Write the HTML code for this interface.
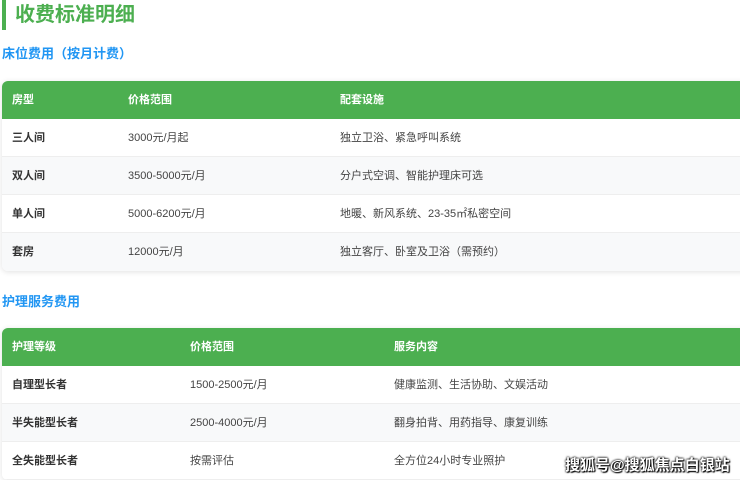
<!DOCTYPE html>
<html><head><meta charset="utf-8"><style>
body{margin:0;width:740px;height:480px;overflow:hidden;background:#fff;font-family:"Liberation Sans","Noto Sans CJK SC",sans-serif;position:relative}
.bar{position:absolute;left:2px;top:0;width:4px;height:30px;background:#4caf50}
h1{position:absolute;left:15px;top:2px;margin:0;font-size:20px;color:#4caf50;font-weight:bold;line-height:26px}
h2{position:absolute;left:2px;margin:0;font-size:13px;color:#2196f3;font-weight:bold;line-height:16px}
.t{position:absolute;left:2px;width:750px;border-radius:6px;overflow:hidden;box-shadow:0 1px 6px rgba(0,0,0,.12)}
.r{height:38px;position:relative;font-size:11px;color:#444;border-bottom:1px solid #eee;box-sizing:border-box}
.r:nth-child(odd){background:#f8f9fa}
.r.h{background:#4caf50;color:#fff;font-weight:bold;border:0}
.r span{position:absolute;top:0;line-height:38px}
.r span:first-child{font-weight:bold;color:#333}
.r.h span{color:#fff}
.wm{position:absolute;left:565px;top:454px;font-size:15px;color:#fff;font-weight:bold;text-shadow:0 0 2px #000,0 0 2px #000,1px 1px 1px #000}
</style></head><body>
<div class="bar"></div><h1>收费标准明细</h1>
<h2 style="top:46px">床位费用（按月计费）</h2>
<div class="t" style="top:81px">
<div class="r h"><span style="left:10px">房型</span><span style="left:126px">价格范围</span><span style="left:338px">配套设施</span></div>
<div class="r" style="background:#fff"><span style="left:10px">三人间</span><span style="left:126px">3000元/月起</span><span style="left:338px">独立卫浴、紧急呼叫系统</span></div>
<div class="r" style="background:#f8f9fa"><span style="left:10px">双人间</span><span style="left:126px">3500-5000元/月</span><span style="left:338px">分户式空调、智能护理床可选</span></div>
<div class="r" style="background:#fff"><span style="left:10px">单人间</span><span style="left:126px">5000-6200元/月</span><span style="left:338px">地暖、新风系统、23-35㎡私密空间</span></div>
<div class="r" style="background:#f8f9fa;border:0"><span style="left:10px">套房</span><span style="left:126px">12000元/月</span><span style="left:338px">独立客厅、卧室及卫浴（需预约）</span></div>
</div>
<h2 style="top:294px">护理服务费用</h2>
<div class="t" style="top:328px">
<div class="r h"><span style="left:10px">护理等级</span><span style="left:188px">价格范围</span><span style="left:392px">服务内容</span></div>
<div class="r" style="background:#fff"><span style="left:10px">自理型长者</span><span style="left:188px">1500-2500元/月</span><span style="left:392px">健康监测、生活协助、文娱活动</span></div>
<div class="r" style="background:#f8f9fa"><span style="left:10px">半失能型长者</span><span style="left:188px">2500-4000元/月</span><span style="left:392px">翻身拍背、用药指导、康复训练</span></div>
<div class="r" style="background:#fff"><span style="left:10px">全失能型长者</span><span style="left:188px">按需评估</span><span style="left:392px">全方位24小时专业照护</span></div>
</div>
<div class="wm">搜狐号@搜狐焦点白银站</div>
</body></html>
